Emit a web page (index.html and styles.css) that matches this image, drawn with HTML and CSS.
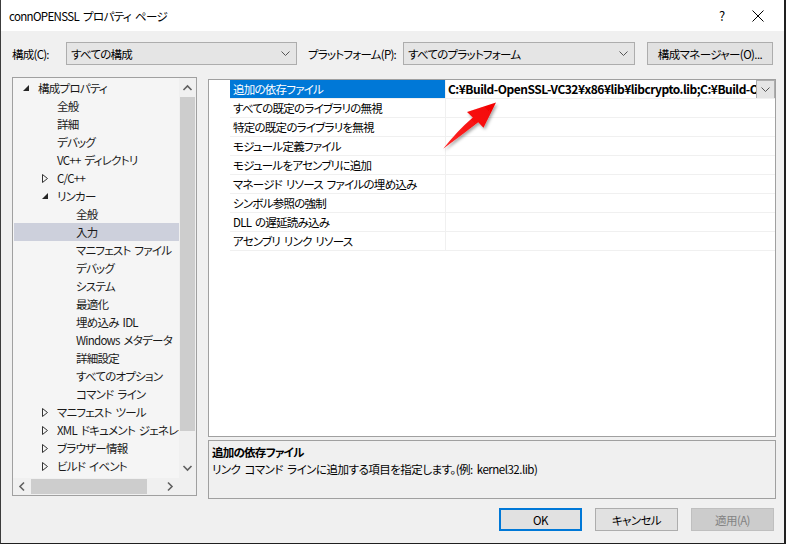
FILE: index.html
```html
<!DOCTYPE html>
<html lang="ja">
<head>
<meta charset="utf-8">
<title>connOPENSSL プロパティ ページ</title>
<link rel="stylesheet" href="styles.css">
</head>
<body>
<div class="window">
  <div class="titlebar">
    <span class="title">connOPENSSL プロパティ ページ</span>
    <span class="help">?</span>
    <span class="close"><svg width="12" height="12" viewBox="0 0 12 12"><path d="M0.5 0.5 L11.5 11.5 M11.5 0.5 L0.5 11.5" stroke="#000" stroke-width="1" fill="none"/></svg></span>
  </div>

  <div class="toolbar">
    <span class="tlabel lab1">構成(C):</span>
    <div class="combo combo1"><span>すべての構成</span><svg class="chev" width="9" height="5" viewBox="0 0 9 5"><path d="M0.5 0.5 L4.5 4.5 L8.5 0.5" stroke="#555" fill="none"/></svg></div>
    <span class="tlabel lab2">プラットフォーム(P):</span>
    <div class="combo combo2"><span>すべてのプラットフォーム</span><svg class="chev" width="9" height="5" viewBox="0 0 9 5"><path d="M0.5 0.5 L4.5 4.5 L8.5 0.5" stroke="#555" fill="none"/></svg></div>
    <button class="btn mgr">構成マネージャー(O)...</button>
  </div>

  <div class="main">
    <div class="tree">
      <div class="tree-content">
        <div class="row l0"><span class="tg"><svg width="6" height="6" viewBox="0 0 6 6"><path d="M6 0 L6 6 L0 6 Z" fill="#262626"/></svg></span>構成プロパティ</div>
        <div class="row l1"><span class="tg"></span>全般</div>
        <div class="row l1"><span class="tg"></span>詳細</div>
        <div class="row l1"><span class="tg"></span>デバッグ</div>
        <div class="row l1"><span class="tg"></span>VC++ ディレクトリ</div>
        <div class="row l1"><span class="tg"><svg width="6" height="9" viewBox="0 0 6 9"><path d="M0.5 0.5 L5.5 4.5 L0.5 8.5 Z" stroke="#333" fill="none"/></svg></span>C/C++</div>
        <div class="row l1"><span class="tg"><svg width="6" height="6" viewBox="0 0 6 6"><path d="M6 0 L6 6 L0 6 Z" fill="#262626"/></svg></span>リンカー</div>
        <div class="row l2"><span class="tg"></span>全般</div>
        <div class="row l2 sel"><span class="tg"></span>入力</div>
        <div class="row l2"><span class="tg"></span>マニフェスト ファイル</div>
        <div class="row l2"><span class="tg"></span>デバッグ</div>
        <div class="row l2"><span class="tg"></span>システム</div>
        <div class="row l2"><span class="tg"></span>最適化</div>
        <div class="row l2"><span class="tg"></span>埋め込み IDL</div>
        <div class="row l2"><span class="tg"></span>Windows メタデータ</div>
        <div class="row l2"><span class="tg"></span>詳細設定</div>
        <div class="row l2"><span class="tg"></span>すべてのオプション</div>
        <div class="row l2"><span class="tg"></span>コマンド ライン</div>
        <div class="row l1"><span class="tg"><svg width="6" height="9" viewBox="0 0 6 9"><path d="M0.5 0.5 L5.5 4.5 L0.5 8.5 Z" stroke="#333" fill="none"/></svg></span>マニフェスト ツール</div>
        <div class="row l1"><span class="tg"><svg width="6" height="9" viewBox="0 0 6 9"><path d="M0.5 0.5 L5.5 4.5 L0.5 8.5 Z" stroke="#333" fill="none"/></svg></span>XML ドキュメント ジェネレー</div>
        <div class="row l1"><span class="tg"><svg width="6" height="9" viewBox="0 0 6 9"><path d="M0.5 0.5 L5.5 4.5 L0.5 8.5 Z" stroke="#333" fill="none"/></svg></span>ブラウザー情報</div>
        <div class="row l1"><span class="tg"><svg width="6" height="9" viewBox="0 0 6 9"><path d="M0.5 0.5 L5.5 4.5 L0.5 8.5 Z" stroke="#333" fill="none"/></svg></span>ビルド イベント</div>
        <div class="row l1"><span class="tg"><svg width="6" height="9" viewBox="0 0 6 9"><path d="M0.5 0.5 L5.5 4.5 L0.5 8.5 Z" stroke="#333" fill="none"/></svg></span>カスタム ビルド ステップ</div>
      </div>
      <div class="vscroll">
        <svg class="sarrow" width="17" height="19" viewBox="0 0 17 19"><path d="M4.5 12 L8.5 8 L12.5 12" stroke="#606060" stroke-width="1.6" fill="none"/></svg>
        <div class="vtrack"><div class="vthumb"></div></div>
        <svg class="sarrow" width="17" height="19" viewBox="0 0 17 19"><path d="M4.5 7 L8.5 11 L12.5 7" stroke="#606060" stroke-width="1.6" fill="none"/></svg>
      </div>
      <div class="hscroll">
        <svg class="sarrow" width="18" height="17" viewBox="0 0 18 17"><path d="M11 4.5 L7 8.5 L11 12.5" stroke="#606060" stroke-width="1.6" fill="none"/></svg>
        <div class="htrack"><div class="hthumb"></div></div>
        <svg class="sarrow" width="18" height="17" viewBox="0 0 18 17"><path d="M7 4.5 L11 8.5 L7 12.5" stroke="#606060" stroke-width="1.6" fill="none"/></svg>
      </div>
      <div class="corner"></div>
    </div>

    <div class="right">
      <div class="grid">
        <div class="prow sel"><div class="gut"></div><div class="pname">追加の依存ファイル</div><div class="pval"><span class="vtext">C:¥Build-OpenSSL-VC32¥x86¥lib¥libcrypto.lib;C:¥Build-OpenSSL-VC32¥x86¥lib¥libssl.lib</span><span class="dd"><svg width="9" height="5" viewBox="0 0 9 5"><path d="M0.5 0.5 L4.5 4.5 L8.5 0.5" stroke="#555" fill="none"/></svg></span></div></div>
        <div class="prow"><div class="gut"></div><div class="pname">すべての既定のライブラリの無視</div><div class="pval"></div></div>
        <div class="prow"><div class="gut"></div><div class="pname">特定の既定のライブラリを無視</div><div class="pval"></div></div>
        <div class="prow"><div class="gut"></div><div class="pname">モジュール定義ファイル</div><div class="pval"></div></div>
        <div class="prow"><div class="gut"></div><div class="pname">モジュールをアセンブリに追加</div><div class="pval"></div></div>
        <div class="prow"><div class="gut"></div><div class="pname">マネージド リソース ファイルの埋め込み</div><div class="pval"></div></div>
        <div class="prow"><div class="gut"></div><div class="pname">シンボル参照の強制</div><div class="pval"></div></div>
        <div class="prow"><div class="gut"></div><div class="pname">DLL の遅延読み込み</div><div class="pval"></div></div>
        <div class="prow"><div class="gut"></div><div class="pname">アセンブリ リンク リソース</div><div class="pval"></div></div>
      </div>
      <div class="desc">
        <div class="dtitle">追加の依存ファイル</div>
        <div class="dtext">リンク コマンド ラインに追加する項目を指定します。(例: kernel32.lib)</div>
      </div>
    </div>
  </div>

  <div class="footer">
    <button class="btn fbtn ok">OK</button>
    <button class="btn fbtn">キャンセル</button>
    <button class="btn fbtn dis">適用(A)</button>
  </div>

  <svg class="redarrow" width="786" height="544" viewBox="0 0 786 544">
    <defs>
      <filter id="sh" x="-20%" y="-20%" width="160%" height="160%">
        <feDropShadow dx="1.5" dy="2" stdDeviation="1.6" flood-color="#000" flood-opacity="0.35"/>
      </filter>
      <linearGradient id="rg" x1="0" y1="1" x2="1" y2="0">
        <stop offset="0" stop-color="#ff2a2a"/>
        <stop offset="1" stop-color="#f20000"/>
      </linearGradient>
    </defs>
    <path d="M496 102.5 L467 112 L472.8 117.4 Q457 131 443.2 148.8 Q461 135.5 478.2 122.2 L483.5 127.8 Z" fill="url(#rg)" filter="url(#sh)"/>
  </svg>
</div>
</body>
</html>
```

FILE: styles.css
```css
* { box-sizing: border-box; }
html, body { margin: 0; padding: 0; }
body {
  width: 786px;
  height: 544px;
  overflow: hidden;
  background: #1e1e1e;
  font-family: "Noto Sans CJK JP", "Noto Sans", sans-serif;
  font-size: 11.5px;
  letter-spacing: -0.75px;
  word-spacing: 2px;
  font-feature-settings: "palt" 1;
  color: #000;
}
.window {
  position: relative;
  width: 786px;
  height: 544px;
  background: #f0f0f0;
  border-left: 1px solid #3c3c3c;
  border-right: 2px solid #202020;
  border-bottom: 1px solid #202020;
  overflow: hidden;
}
.titlebar {
  height: 31px;
  background: #fff;
  display: flex;
  align-items: center;
  padding-left: 8px;
  line-height: 16px;
}
.title { flex: 1; letter-spacing: -0.65px; }
.help { width: 40px; text-align: center; font-size: 13px; margin-right: 7px; letter-spacing: 0; }
.close { width: 18px; display: flex; justify-content: center; margin-right: 17px; }

.toolbar {
  margin-top: 11px;
  height: 23px;
  display: flex;
  align-items: center;
  padding-left: 11px;
  line-height: 16px;
}
.tlabel { white-space: nowrap; }
.lab1 { width: 54px; }
.lab2 { width: 95px; margin-left: 11px; }
.combo {
  height: 23px;
  border: 1px solid #adadad;
  background: #e5e5e5;
  display: flex;
  align-items: center;
  padding-left: 4px;
  padding-right: 6px;
}
.combo span { flex: 1; }
.combo1 { width: 231px; }
.combo2 { width: 232px; }
.chev { display: block; }
.btn {
  font-family: inherit;
  font-size: 11.5px;
  letter-spacing: -0.6px;
  font-feature-settings: "palt" 1;
  color: #000;
  background: #e1e1e1;
  border: 1px solid #adadad;
  height: 23px;
  padding: 0;
  line-height: 16px;
}
.mgr { width: 126px; margin-left: 12px; }

.main {
  margin-top: 12px;
  height: 422px;
  display: flex;
  padding-left: 11px;
  padding-right: 8px;
}
.tree {
  width: 185px;
  height: 419px;
  border: 1px solid #a0a0a0;
  display: grid;
  grid-template-columns: 166px 17px;
  grid-template-rows: 400px 17px;
  background: #f5f5f5;
}
.tree-content {
  overflow: hidden;
  padding: 1px 0 0 1px;
  background: #f5f5f5;
}
.row {
  height: 18px;
  line-height: 18px;
  display: flex;
  align-items: center;
  white-space: pre;
  color: #1a1a1a;
}
.row.sel { background: #cdd0dc; width: 165px; }
.tg { width: 15px; flex: none; display: flex; align-items: center; }
.tg svg { display: block; }
.l0 { padding-left: 9px; }
.l1 { padding-left: 28px; }
.l2 { padding-left: 47px; }
.vscroll {
  background: #f0f0f0;
  display: flex;
  flex-direction: column;
}
.vtrack { flex: 1; padding: 0 1px; }
.vthumb { height: 334px; background: #cdcdcd; }
.hscroll {
  background: #f0f0f0;
  display: flex;
  align-items: stretch;
}
.htrack { flex: 1; padding: 1px 0; }
.hthumb { width: 116px; height: 15px; background: #cdcdcd; }
.sarrow { display: block; flex: none; }
.corner { background: #f0f0f0; }

.right {
  flex: 1;
  margin-left: 11px;
  display: flex;
  flex-direction: column;
}
.grid {
  margin-top: 2px;
  height: 358px;
  border: 1px solid #a0a0a0;
  background: #fff;
}
.prow {
  display: grid;
  grid-template-columns: 21px 215px 1fr;
  height: 19px;
}
.gut { background: #fff; }
.pname {
  padding-left: 3px;
  line-height: 18px;
  border-bottom: 1px solid #f0f0f0;
  white-space: nowrap;
  overflow: hidden;
}
.pval {
  border-left: 1px solid #f0f0f0;
  border-bottom: 1px solid #f0f0f0;
  display: flex;
  overflow: hidden;
  line-height: 18px;
}
.prow.sel .pname { background: #0078d7; color: #fff; }
.vtext {
  flex: 1;
  padding-left: 2px;
  font-size: 12px;
  font-weight: bold;
  letter-spacing: -0.5px;
  word-spacing: 0;
  white-space: nowrap;
  overflow: hidden;
}
.dd {
  width: 19px;
  flex: none;
  height: 19px;
  margin-bottom: -1px;
  background: #e5e5e5;
  border: 1px solid #adadad;
  display: flex;
  align-items: center;
  justify-content: center;
}
.dd svg { display: block; }
.desc {
  margin-top: 3px;
  height: 59px;
  border: 1px solid #a0a0a0;
  padding: 3px 0 0 3px;
  line-height: 17px;
}
.dtitle { font-weight: bold; }
.dtext { letter-spacing: -0.5px; }

.footer {
  margin-top: 9px;
  display: flex;
  justify-content: flex-end;
  gap: 13px;
  padding-right: 10px;
}
.fbtn { width: 83px; }
.ok { border: 2px solid #0078d7; }
.dis { background: #cccccc; border-color: #bfbfbf; color: #838383; }

.redarrow {
  position: absolute;
  left: -1px;
  top: 0;
  pointer-events: none;
}
```
